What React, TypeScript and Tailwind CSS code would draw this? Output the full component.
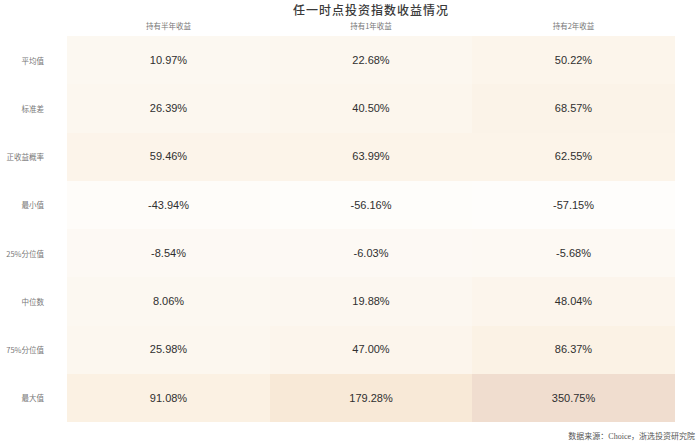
import React from "react";

const cjk = { fontFamily: '"Noto Sans CJK SC", "Noto Sans", sans-serif' };
const num = { fontFamily: '"Liberation Sans", Arial, sans-serif' };

type Cell = { v: string; bg: string };
type Row = { label: string; cells: Cell[] };

const rows: Row[] = [
  { label: "平均值", cells: [
    { v: "10.97%", bg: "bg-[#fcf8f1]" },
    { v: "22.68%", bg: "bg-[#fcf7ef]" },
    { v: "50.22%", bg: "bg-[#fcf5eb]" },
  ] },
  { label: "标准差", cells: [
    { v: "26.39%", bg: "bg-[#fcf7ef]" },
    { v: "40.50%", bg: "bg-[#fcf6ed]" },
    { v: "68.57%", bg: "bg-[#fbf3e8]" },
  ] },
  { label: "正收益概率", cells: [
    { v: "59.46%", bg: "bg-[#fcf4ea]" },
    { v: "63.99%", bg: "bg-[#fcf4e9]" },
    { v: "62.55%", bg: "bg-[#fcf4e9]" },
  ] },
  { label: "最小值", cells: [
    { v: "-43.94%", bg: "bg-[#fefcf9]" },
    { v: "-56.16%", bg: "bg-[#fefdfa]" },
    { v: "-57.15%", bg: "bg-[#fefdfb]" },
  ] },
  { label: "25%分位值", cells: [
    { v: "-8.54%", bg: "bg-[#fdf9f4]" },
    { v: "-6.03%", bg: "bg-[#fdf9f4]" },
    { v: "-5.68%", bg: "bg-[#fdf9f3]" },
  ] },
  { label: "中位数", cells: [
    { v: "8.06%", bg: "bg-[#fcf8f1]" },
    { v: "19.88%", bg: "bg-[#fcf7f0]" },
    { v: "48.04%", bg: "bg-[#fcf5ec]" },
  ] },
  { label: "75%分位值", cells: [
    { v: "25.98%", bg: "bg-[#fcf7ef]" },
    { v: "47.00%", bg: "bg-[#fcf5ec]" },
    { v: "86.37%", bg: "bg-[#fbf2e5]" },
  ] },
  { label: "最大值", cells: [
    { v: "91.08%", bg: "bg-[#fbf1e3]" },
    { v: "179.28%", bg: "bg-[#f8e9d7]" },
    { v: "350.75%", bg: "bg-[#f0ddcf]" },
  ] },
];

const headers = ["持有半年收益", "持有1年收益", "持有2年收益"];

export default function App() {
  return (
    <div className="w-[700px] h-[445px] bg-white overflow-hidden flex flex-col">
      <div className="h-[19px] pt-[1px] flex items-center text-[12px] leading-[14px] text-[#3a3a3a] font-medium" style={cjk}>
        <div className="w-[67px]" />
        <div className="w-[608px] text-center tracking-[1px]">任一时点投资指数收益情况</div>
      </div>
      <div className="h-[13px] flex items-center text-[7.5px] leading-[10px] text-[#777]" style={cjk}>
        <div className="w-[67px]" />
        {headers.map((h, i) => (
          <div key={i} className={i === 1 ? "w-[202px] text-center" : "w-[203px] text-center"}>{h}</div>
        ))}
      </div>
      <div className="h-[4px]" />
      <div className="flex flex-col">
        {rows.map((r, ri) => (
          <div key={ri} className="flex h-[48.25px]">
            <div className="w-[67px] flex items-center justify-end pr-[23px] text-[7.5px] text-[#777] whitespace-nowrap" style={cjk}>
              {r.label}
            </div>
            {r.cells.map((c, ci) => (
              <div
                key={ci}
                className={`${ci === 1 ? "w-[202px]" : "w-[203px]"} ${c.bg} flex items-center justify-center text-[11px] text-[#2f2f2f]`}
                style={num}
              >
                {c.v}
              </div>
            ))}
          </div>
        ))}
      </div>
      <div className="flex justify-end pr-[5px] pt-[9px] text-[8px] leading-[10px] text-[#555]" style={cjk}>
        <span>数据来源：<span style={{ fontFamily: '"Liberation Serif", serif' }}>Choice</span>，浙选投资研究院</span>
      </div>
    </div>
  );
}
